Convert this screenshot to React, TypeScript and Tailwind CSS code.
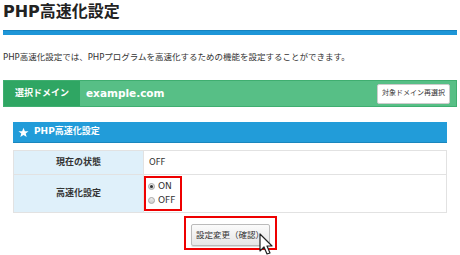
import React from "react";

const font = { fontFamily: '"DejaVu Sans", "Noto Sans CJK JP", sans-serif' };

function Cursor() {
  return (
    <svg
      className="absolute left-[259px] top-[233px]"
      width="16"
      height="24"
      viewBox="0 0 16 24"
    >
      <path
        d="M1 1 L1 18 L5 14 L8 21 L11 20 L8 13 L13 13 Z"
        fill="#fff"
        stroke="#222"
        strokeWidth="1.2"
        strokeLinejoin="round"
      />
    </svg>
  );
}

function Star() {
  return (
    <svg width="11" height="11" viewBox="0 0 24 24" fill="#fff">
      <path d="M12 1.5 L15 9 L23 9.3 L16.8 14.3 L19 22 L12 17.6 L5 22 L7.2 14.3 L1 9.3 L9 9 Z" />
    </svg>
  );
}

function Radio({ checked, label }: { checked?: boolean; label: string }) {
  return (
    <label className="flex items-center gap-[3px] leading-none">
      <span className="w-[7px] h-[7px] rounded-full border border-[#aaa] bg-gradient-to-b from-[#eee] to-[#ccc] flex items-center justify-center">
        {checked && <span className="w-[3px] h-[3px] rounded-full bg-[#333]" />}
      </span>
      <span className="text-[9px] text-[#333]">{label}</span>
    </label>
  );
}

export default function App() {
  return (
    <div className="relative w-[460px] h-[255px] bg-white overflow-hidden px-[3px] pt-[2px]" style={font}>
      <h1 className="text-[16px] font-bold text-[#222] leading-[20px]">PHP高速化設定</h1>
      <div className="mt-[8px] h-[5px] bg-[#1e96d8] border-t border-[#1683c0]" />

      <p className="mt-[16px] text-[8.5px] text-[#333] leading-[12px]">
        PHP高速化設定では、PHPプログラムを高速化するための機能を設定することができます。
      </p>

      <div className="mt-[17px] h-[27px] flex items-stretch bg-[#57bf86] border border-[#3fae70]">
        <div className="w-[76px] bg-[#2fa663] flex items-center justify-center text-white font-bold text-[9px]">
          選択ドメイン
        </div>
        <div className="flex-1 flex items-center pl-[6px] text-white font-bold text-[10.5px]">
          example.com
        </div>
        <div className="flex items-center pr-[6px]">
          <button className="h-[20px] px-[4px] bg-white rounded-[2px] border border-[#ccc] text-[7px] text-[#333]">
            対象ドメイン再選択
          </button>
        </div>
      </div>

      <div className="mx-[10px] mt-[15px]">
        <div className="h-[21px] bg-[#229cd9] border-b border-[#1a86bd] flex items-center gap-[5px] pl-[5px] text-white font-bold text-[9px]">
          <Star />
          <span>PHP高速化設定</span>
        </div>

        <table className="mt-[7px] w-full border-collapse border border-[#e2e2e2]">
          <tbody>
            <tr className="h-[24px]">
              <th className="w-[130px] bg-[#dff0fa] border border-[#e2e2e2] text-[9px] font-bold text-[#333]">
                現在の状態
              </th>
              <td className="border border-[#e2e2e2] pl-[5px] text-[8.5px] text-[#333]">OFF</td>
            </tr>
            <tr className="h-[38px]">
              <th className="bg-[#dff0fa] border border-[#e2e2e2] text-[9px] font-bold text-[#333]">
                高速化設定
              </th>
              <td className="border border-[#e2e2e2] p-0 align-middle">
                <div className="w-[38px] h-[35px] border-2 border-[#ee0000] flex flex-col justify-center gap-[5px] pl-[2px]">
                  <Radio checked label="ON" />
                  <Radio label="OFF" />
                </div>
              </td>
            </tr>
          </tbody>
        </table>

        <div className="mt-[3px] flex justify-center">
          <div className="border-2 border-[#ee0000] px-[5px] pt-[3px] pb-[2px]">
            <button className="w-[79px] h-[22px] rounded-[2px] border border-[#bbb] bg-gradient-to-b from-[#fbfbfb] to-[#e6e6e6] text-[8.5px] text-[#333] shadow-[0_1px_1px_rgba(0,0,0,0.15)]">
              設定変更（確認）
            </button>
          </div>
        </div>
      </div>

      <Cursor />
    </div>
  );
}
